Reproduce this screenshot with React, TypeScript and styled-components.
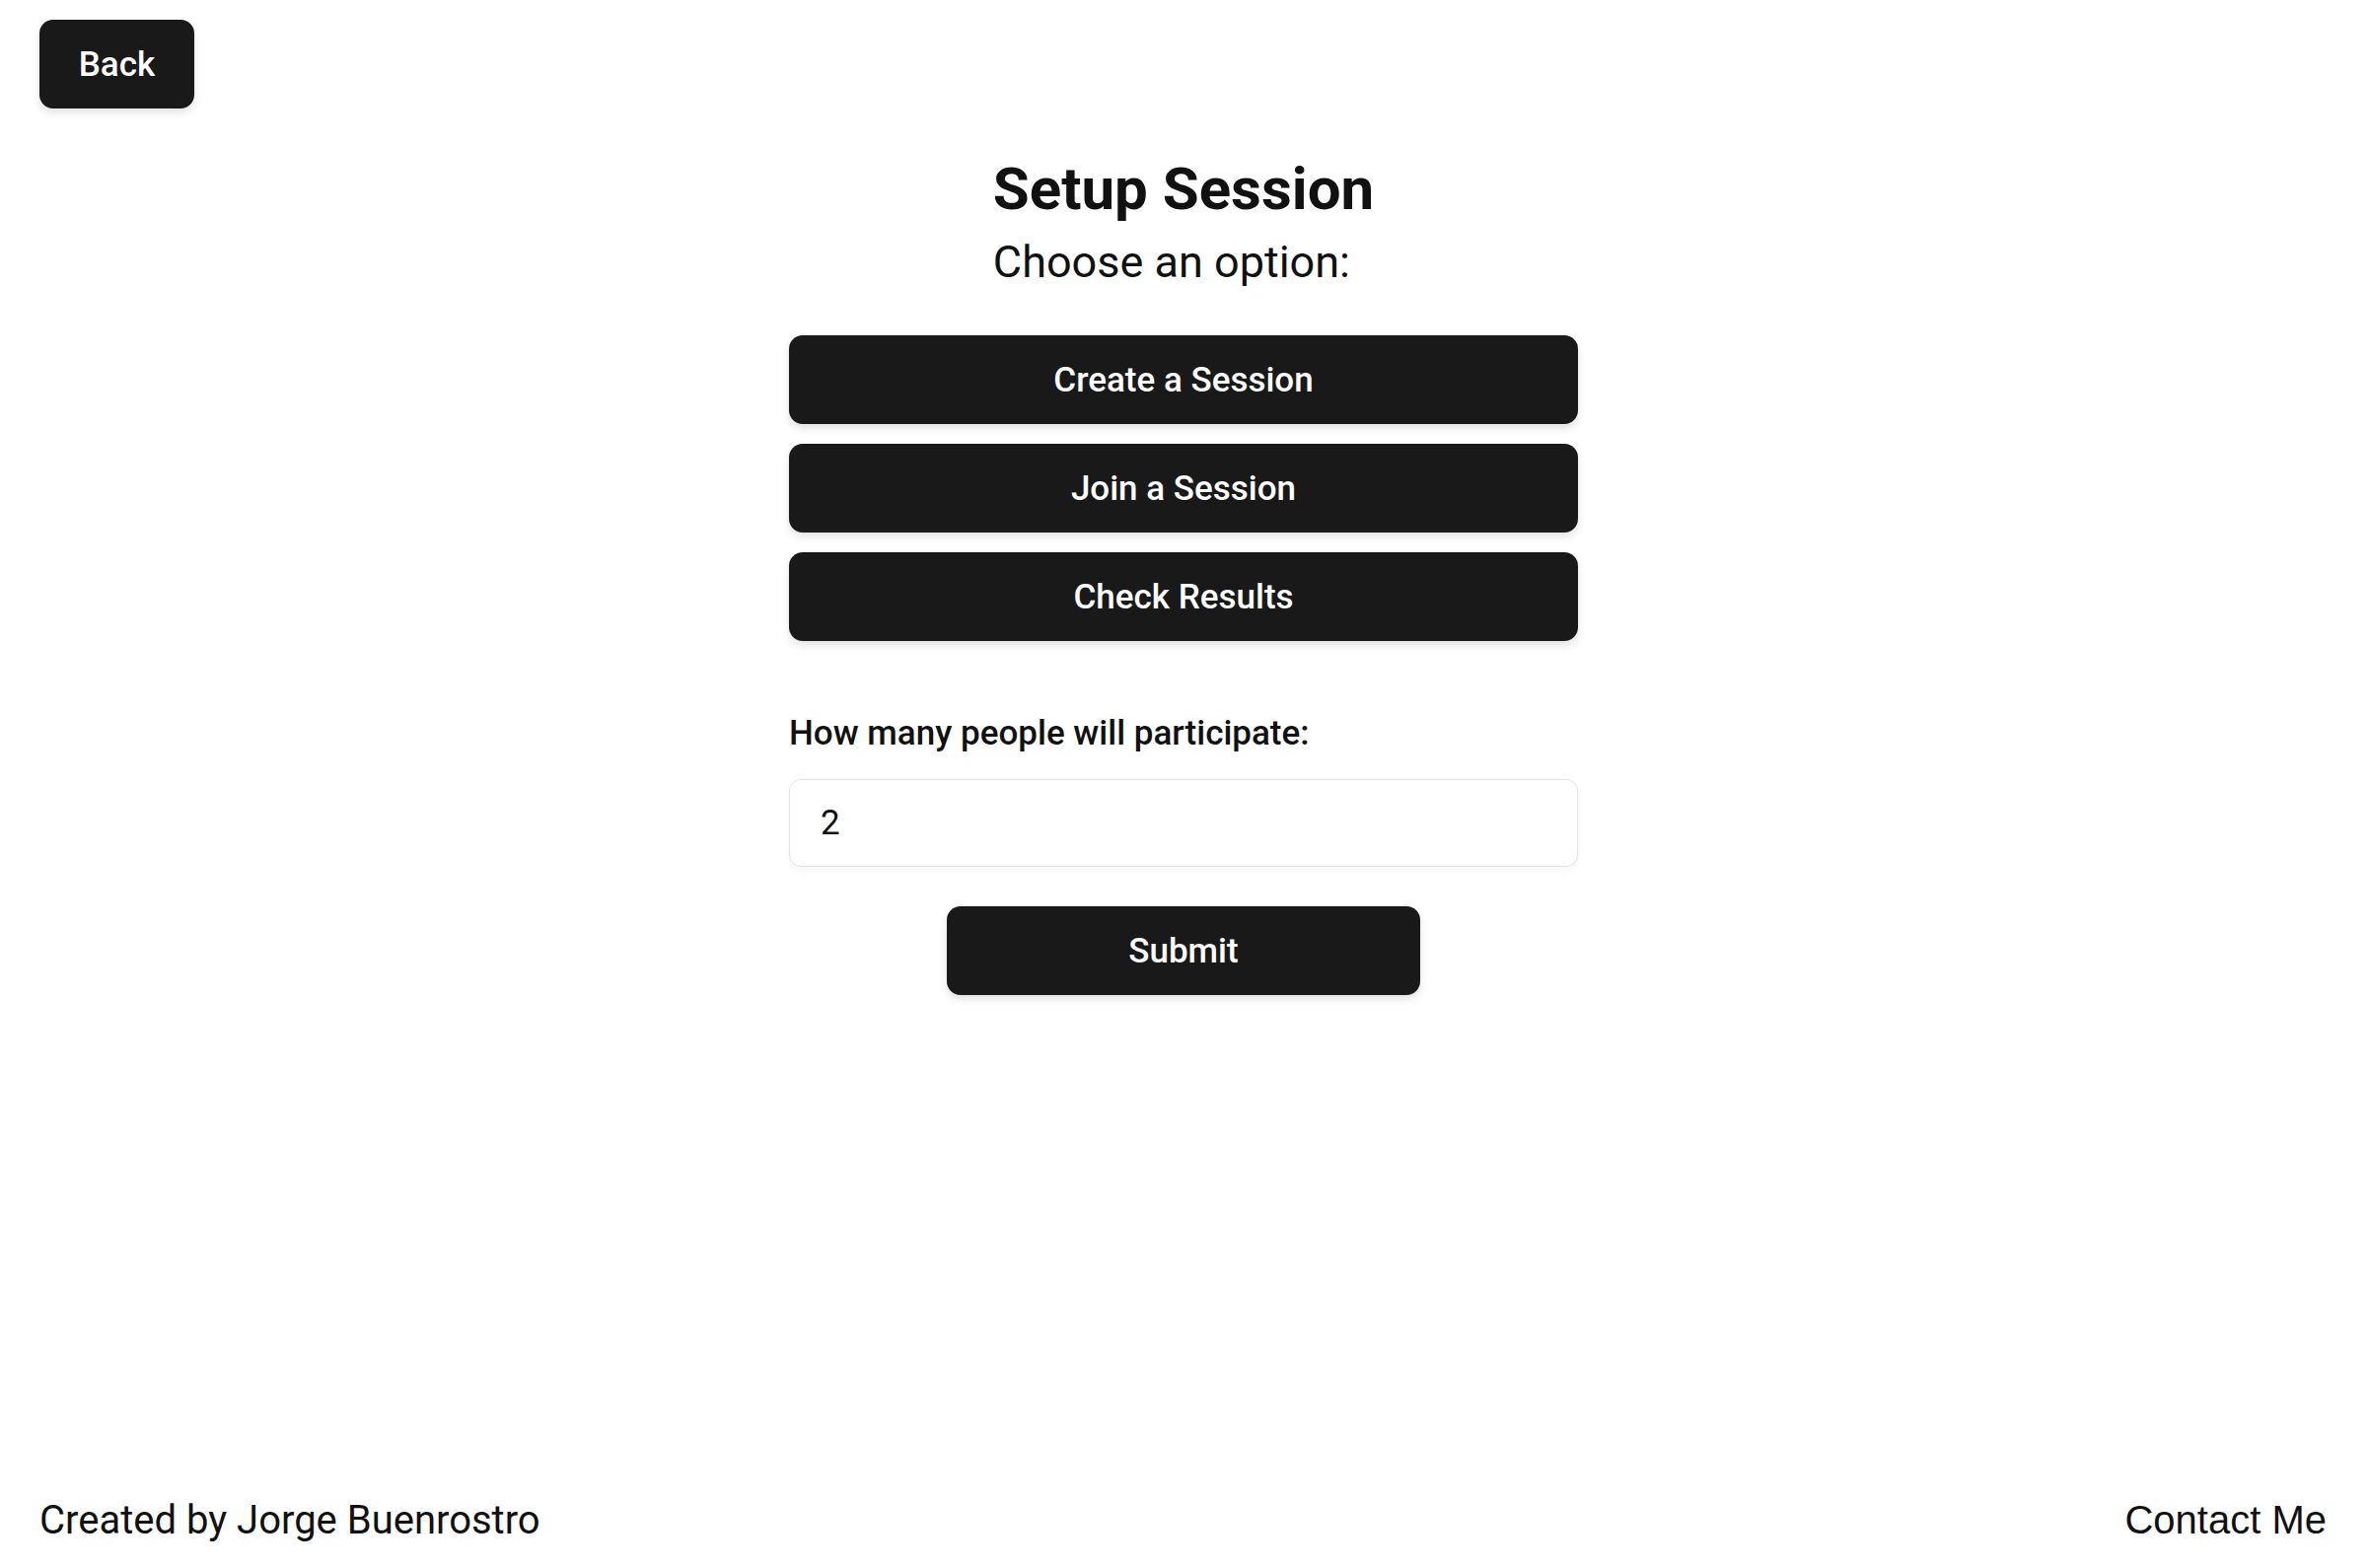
import React from "react";
import styled, { createGlobalStyle } from "styled-components";

const GlobalStyle = createGlobalStyle`
  * { box-sizing: border-box; }
  html, body { margin: 0; padding: 0; background: #ffffff; }
  body { font-family: Roboto, "Liberation Sans", Arial, sans-serif; color: #111111; }
`;

const Page = styled.div`
  min-height: 100vh;
  display: flex;
  flex-direction: column;
`;

const TopBar = styled.header`
  display: flex;
  padding: 20px 40px 0;
`;

const DarkButton = styled.button<{ $width?: string; $height?: string }>`
  display: flex;
  align-items: center;
  justify-content: center;
  width: ${(p) => p.$width ?? "100%"};
  height: ${(p) => p.$height ?? "90px"};
  padding: 0;
  border: none;
  border-radius: 14px;
  background: #191919;
  color: #ffffff;
  font-family: Roboto, "Liberation Sans", Arial, sans-serif;
  font-weight: 500;
  font-size: 35px;
  box-shadow: 0 4px 8px rgba(0, 0, 0, 0.12);
  cursor: pointer;
`;

const Main = styled.main`
  display: flex;
  flex-direction: column;
  align-items: center;
  padding-top: 47px;
`;

const Heading = styled.div`
  display: flex;
  flex-direction: column;
  align-items: flex-start;
  gap: 12px;
`;

const Title = styled.h1`
  margin: 0;
  font-size: 60px;
  font-weight: 700;
  line-height: 70px;
  color: #111111;
`;

const Subtitle = styled.p`
  margin: 0;
  font-size: 45px;
  font-weight: 400;
  line-height: 53px;
  color: #111111;
`;

const OptionList = styled.div`
  width: 800px;
  display: flex;
  flex-direction: column;
  gap: 20px;
  margin-top: 48px;
`;

const Form = styled.form`
  width: 800px;
  display: flex;
  flex-direction: column;
  margin-top: 73px;
`;

const Label = styled.label`
  font-size: 35px;
  font-weight: 500;
  line-height: 41px;
  color: #111111;
`;

const NumberInput = styled.input`
  margin-top: 26px;
  width: 100%;
  height: 89px;
  padding: 0 31px;
  border: 1px solid #e3e3e3;
  border-radius: 12px;
  background: #ffffff;
  font-family: Roboto, "Liberation Sans", Arial, sans-serif;
  font-size: 35px;
  color: #111111;
  box-shadow: 0 3px 6px rgba(0, 0, 0, 0.04);
  outline: none;
`;

const SubmitRow = styled.div`
  display: flex;
  justify-content: center;
  margin-top: 40px;
`;

const Footer = styled.footer`
  margin-top: auto;
  display: flex;
  justify-content: space-between;
  align-items: baseline;
  padding: 0 41px 25px 40px;
`;

const Credit = styled.span`
  font-size: 40px;
  line-height: 47px;
  color: #111111;
`;

const ContactLink = styled.a`
  font-family: "Liberation Sans", Arial, sans-serif;
  font-size: 40px;
  line-height: 47px;
  color: #111111;
  text-decoration: none;
`;

export default function App() {
  return (
    <>
      <GlobalStyle />
      <Page>
        <TopBar>
          <DarkButton $width="157px" $height="90px">Back</DarkButton>
        </TopBar>
        <Main>
          <Heading>
            <Title>Setup Session</Title>
            <Subtitle>Choose an option:</Subtitle>
          </Heading>
          <OptionList>
            <DarkButton>Create a Session</DarkButton>
            <DarkButton>Join a Session</DarkButton>
            <DarkButton>Check Results</DarkButton>
          </OptionList>
          <Form onSubmit={(e) => e.preventDefault()}>
            <Label htmlFor="people">How many people will participate:</Label>
            <NumberInput id="people" type="text" defaultValue="2" />
            <SubmitRow>
              <DarkButton type="submit" $width="480px">Submit</DarkButton>
            </SubmitRow>
          </Form>
        </Main>
        <Footer>
          <Credit>Created by Jorge Buenrostro</Credit>
          <ContactLink href="#">Contact Me</ContactLink>
        </Footer>
      </Page>
    </>
  );
}
